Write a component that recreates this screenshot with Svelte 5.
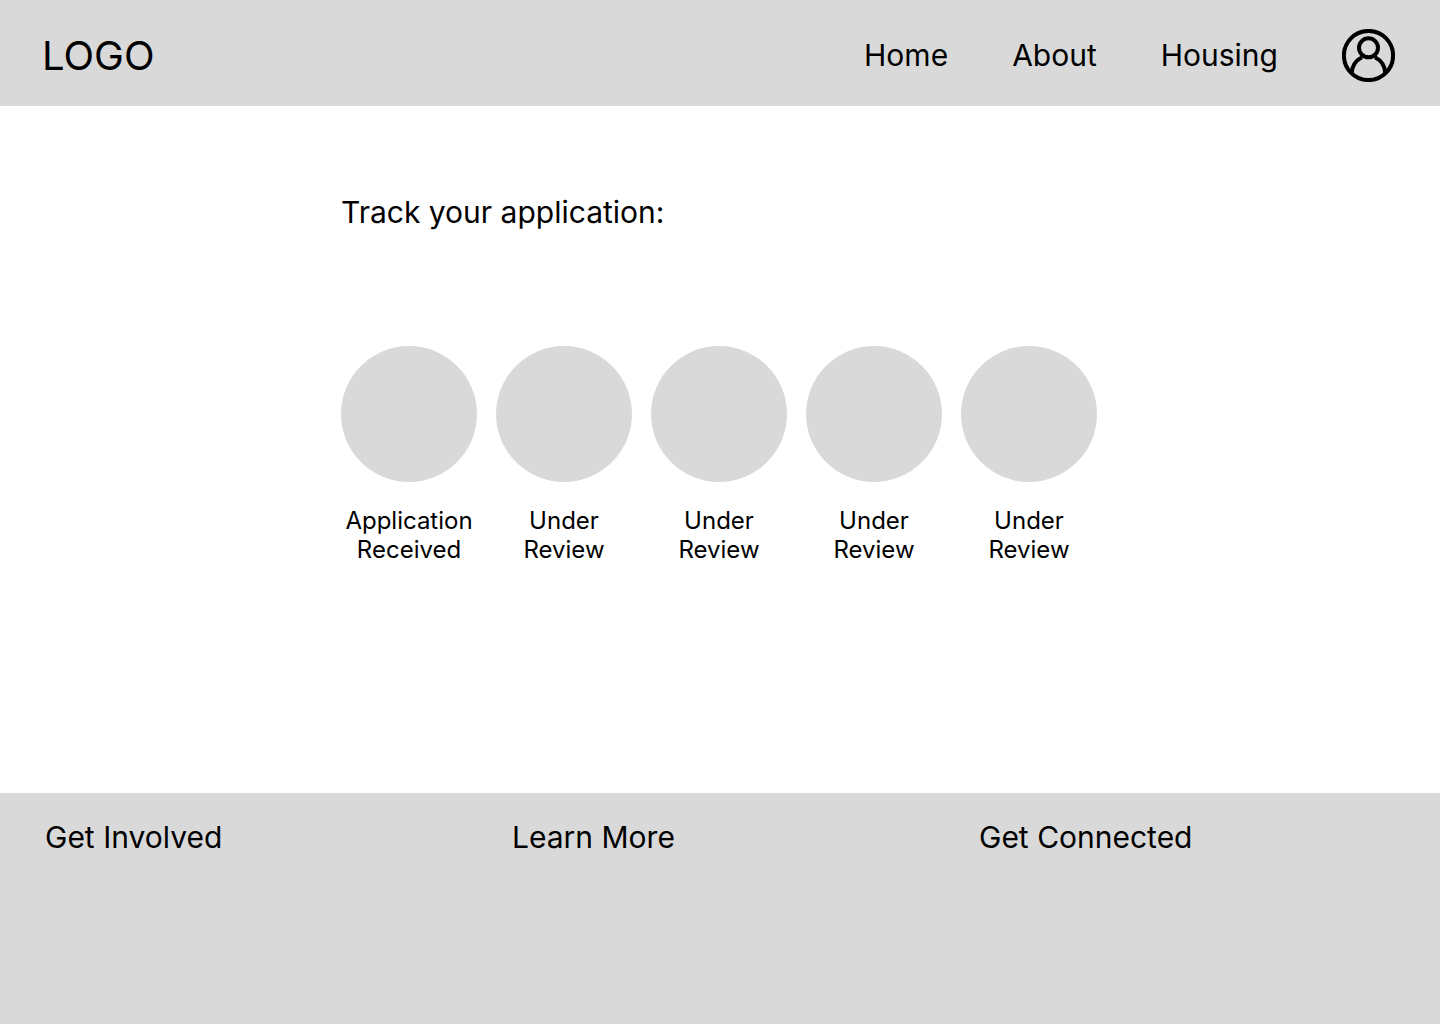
<script>
  const links = ['Home', 'About', 'Housing'];
  const steps = [
    ['Application', 'Received'],
    ['Under', 'Review'],
    ['Under', 'Review'],
    ['Under', 'Review'],
    ['Under', 'Review'],
  ];
  const columns = ['Get Involved', 'Learn More', 'Get Connected'];
</script>

<div class="page">
  <header>
    <a class="logo" href="#top">LOGO</a>
    <nav aria-label="Main">
      {#each links as link}
        <a href={`#${link.toLowerCase()}`}>{link}</a>
      {/each}
      <button type="button" aria-label="Account">
        <svg viewBox="0 0 53 53" fill="none" stroke="#000" stroke-width="4" aria-hidden="true">
          <circle cx="26.5" cy="26.5" r="24.6" />
          <circle cx="26.5" cy="18.8" r="9.5" />
          <path d="M9.7 44.5C10 37 13.5 31.5 20 28.2M33 28.2C39.5 31.5 43 37 43.3 44.5" />
        </svg>
      </button>
    </nav>
  </header>

  <main>
    <div class="tracker">
      <h1>Track your application:</h1>
      <ol>
        {#each steps as [first, second]}
          <li>
            <span class="dot"></span>
            <span class="label">{first}<br />{second}</span>
          </li>
        {/each}
      </ol>
    </div>
  </main>

  <footer>
    {#each columns as column}
      <h2>{column}</h2>
    {/each}
  </footer>
</div>

<style>
  :global(body) {
    margin: 0;
    background: #fff;
  }
  .page {
    min-height: 100vh;
    display: flex;
    flex-direction: column;
    font-family: Inter, sans-serif;
    color: #000;
  }
  header {
    display: flex;
    align-items: center;
    justify-content: space-between;
    padding: 29px 45px 24px 42px;
    background: #d9d9d9;
  }
  a {
    color: inherit;
    text-decoration: none;
  }
  .logo {
    font-size: 40px;
    line-height: 48px;
  }
  nav {
    display: flex;
    align-items: center;
    gap: 64px;
    font-size: 30px;
    line-height: 39px;
  }
  button {
    display: block;
    padding: 0;
    border: 0;
    background: none;
    cursor: pointer;
  }
  svg {
    display: block;
    width: 53px;
    height: 53px;
  }
  main {
    flex: 1;
    display: flex;
    justify-content: center;
    padding: 87px 46px 64px 44px;
  }
  h1,
  h2 {
    margin: 0;
    font-size: 30px;
    line-height: 39px;
    font-weight: 400;
  }
  ol {
    display: flex;
    flex-wrap: wrap;
    gap: 19px;
    margin: 114px 0 0;
    padding: 0;
    list-style: none;
  }
  li {
    width: 136px;
    display: flex;
    flex-direction: column;
    gap: 24px;
    text-align: center;
  }
  .dot {
    aspect-ratio: 1;
    border-radius: 50%;
    background: #d9d9d9;
  }
  .label {
    font-size: 24px;
    line-height: 29px;
  }
  footer {
    display: grid;
    grid-template-columns: repeat(3, 1fr);
    gap: 44px;
    min-height: 186px;
    padding: 25px 38px 20px 45px;
    background: #d9d9d9;
  }
</style>
